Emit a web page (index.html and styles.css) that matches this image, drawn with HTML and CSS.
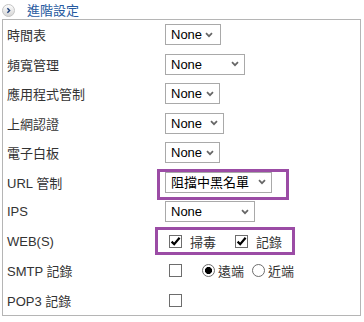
FILE: index.html
```html
<!DOCTYPE html>
<html lang="zh-Hant">
<head>
    <meta charset="UTF-8">
    <meta name="viewport" content="width=device-width, initial-scale=1.0">
    <title>進階設定</title>
    <link rel="stylesheet" href="styles.css">
</head>
<body>

    <div class="panel-title">
        <span class="toggle-btn">
            <svg width="13" height="13" viewBox="0 0 13 13">
                <defs>
                    <linearGradient id="btn-bg" x1="0" y1="0" x2="0" y2="1">
                        <stop offset="0" stop-color="#ffffff"/>
                        <stop offset="1" stop-color="#d4d4d4"/>
                    </linearGradient>
                </defs>
                <circle cx="6.5" cy="6.5" r="6" fill="url(#btn-bg)" stroke="#c4c4c4"/>
                <path d="M5.4 4.3 L7.6 6.5 L5.4 8.7" fill="none" stroke="#1d3f7a" stroke-width="1.4"/>
            </svg>
        </span>
        <span>進階設定</span>
    </div>

    <div class="settings">
        <div class="row">
            <span class="label">時間表</span>
            <span class="field"><select class="w-56"><option>None</option></select></span>
        </div>
        <div class="row">
            <span class="label">頻寬管理</span>
            <span class="field"><select class="w-80"><option>None</option></select></span>
        </div>
        <div class="row">
            <span class="label">應用程式管制</span>
            <span class="field"><select class="w-55"><option>None</option></select></span>
        </div>
        <div class="row">
            <span class="label">上網認證</span>
            <span class="field"><select class="w-59"><option>None</option></select></span>
        </div>
        <div class="row">
            <span class="label">電子白板</span>
            <span class="field"><select class="w-55"><option>None</option></select></span>
        </div>
        <div class="row">
            <span class="label">URL 管制</span>
            <span class="field">
                <span class="mark mark-url"><select class="w-107"><option>阻擋中黑名單</option></select></span>
            </span>
        </div>
        <div class="row">
            <span class="label">IPS</span>
            <span class="field"><select class="w-90"><option>None</option></select></span>
        </div>
        <div class="row">
            <span class="label">WEB(S)</span>
            <span class="field">
                <span class="mark mark-web">
                    <label class="check"><input type="checkbox" checked>掃毒</label>
                    <label class="check"><input type="checkbox" checked>記錄</label>
                </span>
            </span>
        </div>
        <div class="row">
            <span class="label">SMTP 記錄</span>
            <span class="field">
                <input type="checkbox">
                <span class="radios">
                    <label class="radio"><input type="radio" name="smtp" checked>遠端</label>
                    <label class="radio"><input type="radio" name="smtp">近端</label>
                </span>
            </span>
        </div>
        <div class="row">
            <span class="label">POP3 記錄</span>
            <span class="field"><input type="checkbox"></span>
        </div>
    </div>

</body>
</html>
```

FILE: styles.css
```css
body {
    margin: 0;
    background-color: white;
    font-family: "Liberation Sans", "Noto Sans CJK TC", sans-serif;
    font-size: 13px;
    color: #333;
}
.panel-title {
    display: flex;
    align-items: center;
    height: 19px;
    padding-left: 2px;
    color: #275aa0;
}
.toggle-btn {
    display: flex;
    width: 13px;
    height: 13px;
    margin: 2px 12px 0 0;
}
.settings {
    margin-left: 2px;
    width: 357px;
    border: 1px solid #b5b5b5;
}
.row {
    display: grid;
    grid-template-columns: 162px 1fr;
    align-items: center;
    height: 29.5px;
}
.label {
    padding-left: 4px;
}
.field {
    display: flex;
    align-items: center;
}
select {
    -webkit-appearance: none;
    appearance: none;
    height: 21px;
    padding: 0 0 0 5px;
    border: 1px solid #a9a9a9;
    border-radius: 0;
    background: white url("data:image/svg+xml,%3Csvg xmlns='http://www.w3.org/2000/svg' width='8' height='6'%3E%3Cpath d='M1 1.2l3 3 3-3' fill='none' stroke='%23666' stroke-width='1.7'/%3E%3C/svg%3E") no-repeat right 5px center;
    font-family: "Liberation Sans", "Noto Sans CJK TC", sans-serif;
    font-size: 13px;
    color: black;
    outline: none;
}
select.w-56 { width: 56px; background-position: right 7px center; }
select.w-55 { width: 55px; }
select.w-59 { width: 59px; }
select.w-80 { width: 80px; }
select.w-90 { width: 90px; }
select.w-107 { width: 107px; }

input[type="checkbox"] {
    -webkit-appearance: none;
    appearance: none;
    width: 13px;
    height: 13px;
    margin: 3px 3px 3px 4px;
    border: 1px solid #6d6d6d;
    background: white;
    flex-shrink: 0;
}
input[type="checkbox"]:checked {
    background: white url("data:image/svg+xml,%3Csvg xmlns='http://www.w3.org/2000/svg' width='11' height='11'%3E%3Cpath d='M1.6 5.6l2.6 2.6 5.4-6.4' fill='none' stroke='black' stroke-width='2.2'/%3E%3C/svg%3E") no-repeat center;
}
input[type="radio"] {
    -webkit-appearance: none;
    appearance: none;
    width: 13px;
    height: 13px;
    margin: 0 3px 0 0;
    border: 1px solid #6d6d6d;
    border-radius: 50%;
    background: white;
    flex-shrink: 0;
}
input[type="radio"]:checked {
    background: radial-gradient(circle, black 0 3.3px, white 3.8px);
}

.check,
.radio {
    display: flex;
    align-items: center;
}
.check input {
    margin-right: 8px;
}
.check + .check {
    margin-left: 15px;
}
.radios {
    display: flex;
    align-items: center;
    margin-left: 17px;
}
.radio + .radio {
    margin-left: 8px;
}

/* purple highlight boxes */
.mark {
    position: relative;
    display: inline-flex;
    align-items: center;
}
.mark::after {
    content: "";
    position: absolute;
    border: 3px solid #9b4ca5;
    pointer-events: none;
}
.mark-url::after {
    top: -3px;
    left: -8px;
    right: -17px;
    bottom: -7px;
}
.mark-web::after {
    top: -5px;
    left: -10px;
    right: -13px;
    bottom: -4px;
}
```
